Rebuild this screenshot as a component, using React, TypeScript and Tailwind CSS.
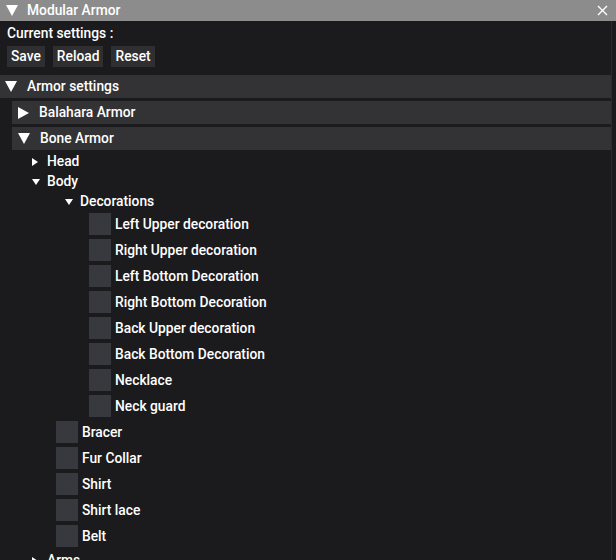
import React from 'react'

const font = { fontFamily: 'Roboto, "Noto Sans", sans-serif' }

function TriRight({ size = 'big' }: { size?: 'big' | 'small' }) {
  return size === 'big' ? (
    <svg width="11" height="12" viewBox="0 0 11 12" className="shrink-0">
      <path d="M0 0 L11 6 L0 12 Z" fill="#fff" />
    </svg>
  ) : (
    <svg width="6" height="8" viewBox="0 0 6 8" className="shrink-0">
      <path d="M0 0 L6 4 L0 8 Z" fill="#fff" />
    </svg>
  )
}

function TriDown({ size = 'big' }: { size?: 'big' | 'small' }) {
  return size === 'big' ? (
    <svg width="12" height="11" viewBox="0 0 12 11" className="shrink-0">
      <path d="M0 0 L12 0 L6 11 Z" fill="#fff" />
    </svg>
  ) : (
    <svg width="8" height="6" viewBox="0 0 8 6" className="shrink-0">
      <path d="M0 0 L8 0 L4 6 Z" fill="#fff" />
    </svg>
  )
}

function Header({ label, open, indent }: { label: string; open: boolean; indent?: boolean }) {
  return (
    <div className={`flex h-[23px] items-center bg-[#333335] ${indent ? 'ml-[12px] pl-[6px]' : 'pl-[5px]'}`}>
      {open ? <TriDown /> : <TriRight />}
      <span className="ml-[10px] text-white">{label}</span>
    </div>
  )
}

function TreeNode({ label, open, pad }: { label: string; open: boolean; pad: string }) {
  return (
    <div className={`flex h-[20px] items-center ${pad}`}>
      <span className="flex w-[15px] items-center">
        {open ? <TriDown size="small" /> : <TriRight size="small" />}
      </span>
      <span className="text-white">{label}</span>
    </div>
  )
}

function Check({ label, pad }: { label: string; pad: string }) {
  return (
    <div className={`flex h-[22px] items-center gap-[4px] ${pad}`}>
      <span className="h-[22px] w-[22px] bg-[#38383f]" />
      <span className="pt-[2px] text-white">{label}</span>
    </div>
  )
}

const decorations = [
  'Left Upper decoration',
  'Right Upper decoration',
  'Left Bottom Decoration',
  'Right Bottom Decoration',
  'Back Upper decoration',
  'Back Bottom Decoration',
  'Necklace',
  'Neck guard',
]

const bodyParts = ['Bracer', 'Fur Collar', 'Shirt', 'Shirt lace', 'Belt']

export default function App() {
  return (
    <div
      style={font}
      className="flex h-[560px] w-[616px] flex-col overflow-hidden bg-[#1b1b1d] text-[13.8px] font-medium leading-none antialiased"
    >
      {/* Title bar */}
      <div className="flex h-[21px] shrink-0 items-center bg-[#8c8c8c] pl-[6px] pr-[8px]">
        <TriDown />
        <span className="ml-[9px] text-white">Modular Armor</span>
        <svg width="11" height="11" viewBox="0 0 11 11" className="ml-auto">
          <path d="M1 1 L10 10 M10 1 L1 10" stroke="#fff" strokeWidth="1.4" />
        </svg>
      </div>

      <div className="mr-[4px] flex flex-1 flex-col border-r border-[#2c2c2e]">
        <div className="flex h-[24px] items-end pl-[7px] pb-[4px] text-white">Current settings :</div>
        <div className="mt-[1px] flex gap-[8px] pl-[7px]">
          {['Save', 'Reload', 'Reset'].map(b => (
            <button key={b} className="flex h-[21px] items-center bg-[#2f2f31] px-[4px] text-white">
              {b}
            </button>
          ))}
        </div>

        <div className="mt-[8px] flex flex-col gap-[3px]">
          <Header label="Armor settings" open />
          <Header label="Balahara Armor" open={false} indent />
          <Header label="Bone Armor" open indent />
        </div>

        <div className="mt-[2px] flex flex-col">
          <TreeNode label="Head" open={false} pad="pl-[32px]" />
          <TreeNode label="Body" open pad="pl-[32px]" />
          <TreeNode label="Decorations" open pad="pl-[65px]" />
          <div className="mt-[1px] flex flex-col gap-[4px]">
            {decorations.map(d => (
              <Check key={d} label={d} pad="pl-[89px]" />
            ))}
            {bodyParts.map(d => (
              <Check key={d} label={d} pad="pl-[56px]" />
            ))}
          </div>
          <div className="mt-[4px]">
            <TreeNode label="Arms" open={false} pad="pl-[32px]" />
          </div>
        </div>
      </div>
    </div>
  )
}
